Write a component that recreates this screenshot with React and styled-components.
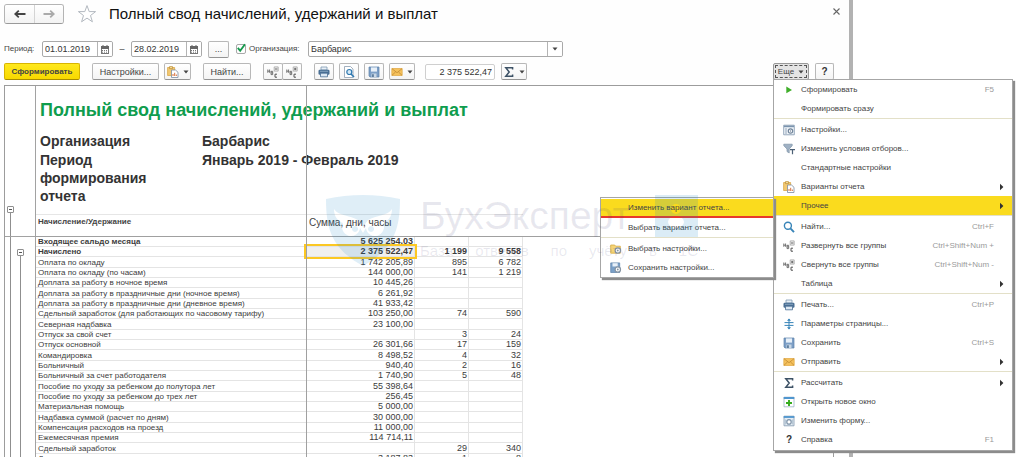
import React, { useState } from 'react';
import styled, { createGlobalStyle, css } from 'styled-components';

const GlobalStyle = createGlobalStyle`
  * {
    box-sizing: border-box;
  }

  body {
    margin: 0;
    background: #fff;
    color: #444;
    font-family: "Liberation Sans", Arial, sans-serif;
    font-size: 9px;
    line-height: 12px;
  }

  button, input, select {
    margin: 0;
    padding: 0;
    font: inherit;
    color: inherit;
  }
`;

const Page = styled.div`
  position: relative;
  display: grid;
  grid-template-columns: 1fr 171px;
  height: 100vh;
  overflow: hidden;
`;

const Window = styled.main`
  display: flex;
  flex-direction: column;
  min-width: 0;
  padding: 4px 15px 0 4px;
  border-right: 4px solid #b2b2b2;
  background: #fefefe;
`;

const SidePanel = styled.aside`
  margin-bottom: 3px;
  border-bottom: 1px solid #a8a8a8;
`;

const Header = styled.header`
  display: flex;
  align-items: center;
  height: 20px;
  margin: 0 -6px 17px 0;
`;

const NavButtons = styled.div`
  display: flex;
  height: 20px;
  border: 1px solid #b4b4b4;
  border-bottom-color: #999;
  border-radius: 3px;
  overflow: hidden;
`;

const NavButton = styled.button`
  display: flex;
  align-items: center;
  justify-content: center;
  width: 29px;
  border: none;
  background: linear-gradient(#fff, #f3f3f3);
  color: ${props => (props.disabled ? '#aaa' : '#444')};

  & + & {
    border-left: 1px solid #d4d4d4;
  }
`;

const StarButton = styled.button`
  display: flex;
  margin: 0 12px 0 13px;
  border: none;
  background: none;
`;

const Title = styled.h1`
  flex: 1;
  margin: 0;
  color: #111;
  font-size: 15px;
  font-weight: 400;
  line-height: 22px;
`;

const CloseButton = styled.button`
  display: flex;
  align-self: flex-start;
  margin: 4px 0 0;
  border: none;
  background: none;
`;

const FilterBar = styled.div`
  display: flex;
  align-items: center;
  height: 16px;
  margin-bottom: 6px;
`;

const FieldLabel = styled.label`
  width: ${props => props.$width}px;
  font-size: 8px;
  white-space: nowrap;
`;

const Field = styled.div`
  display: flex;
  width: ${props => props.$width}px;
  height: 16px;
  border: 1px solid #a9a9a9;
  border-radius: 2px;
  background: #fff;
  overflow: hidden;
`;

const TextInput = styled.input`
  flex: 1;
  min-width: 0;
  padding: 0 2px;
  border: none;
  outline: none;
  background: none;
  color: #333;
`;

const FieldSelect = styled.select`
  flex: 1;
  min-width: 0;
  padding: 0 2px;
  border: none;
  outline: none;
  appearance: none;
  background: none;
  color: #333;
`;

const FieldButton = styled.button`
  display: flex;
  align-items: center;
  justify-content: center;
  width: 15px;
  border: none;
  border-left: 1px solid #b4b4b4;
  background: #fff;
`;

const Dash = styled.span`
  width: 18px;
  text-align: center;
`;

const CheckWrap = styled.span`
  position: relative;
  display: flex;
  width: 10px;
  height: 10px;
  margin-left: 7px;
  margin-right: 3px;

  svg {
    position: absolute;
    top: -1px;
    left: 0;
    pointer-events: none;
  }
`;

const CheckBox = styled.input`
  width: 10px;
  height: 10px;
  appearance: none;
  border: 1px solid #a9a9a9;
  border-radius: 2px;
`;

const Toolbar = styled.div`
  display: flex;
  align-items: center;
  height: 17px;
  margin-bottom: 5px;
`;

const ToolGroup = styled.div`
  display: flex;
  margin-right: ${props => props.$after || 0}px;
`;

const ToolButton = styled.button`
  display: flex;
  flex: none;
  align-items: center;
  justify-content: center;
  gap: 4px;
  width: ${props => props.$width}px;
  height: 17px;
  margin-left: ${props => props.$before || 0}px;
  margin-right: ${props => props.$after || 0}px;
  border: 1px solid #b8b8b8;
  border-bottom-color: #949494;
  border-radius: 2px;
  background: linear-gradient(#fff, #f4f4f4);
  white-space: nowrap;

  ${ToolGroup} > & + & {
    margin-left: -1px;
  }

  ${props => props.$primary && css`
    border-color: #d8b400;
    border-bottom-color: #a98d00;
    background: linear-gradient(#ffe81c, #f8d900);
    font-size: 8px;
    font-weight: 700;
  `}

  ${props => props.$open && css`
    border-color: #999;
    background: #e4e4e4;
    font-size: 8px;
    outline: 1px dashed #555;
    outline-offset: -3px;
  `}
`;

const SumInput = styled.input`
  width: 70px;
  height: 16px;
  margin-right: 6px;
  padding: 0 2px;
  border: 1px solid #cfcfcf;
  border-radius: 2px;
  background: #fff;
  color: #333;
  text-align: right;
`;

const Spacer = styled.div`
  flex: 1;
`;

const MenuAnchor = styled.div`
  position: relative;
  margin-right: 6px;
`;

const MenuBox = styled.ul`
  position: absolute;
  z-index: 10;
  top: 16px;
  left: 0;
  width: 240px;
  margin: 0;
  padding: 0 0 1px;
  border: 1px solid #a6a6a6;
  background: #fff;
  box-shadow: 2px 2px 1px #8c8c8c;
  list-style: none;
`;

const SubMenuBox = styled(MenuBox)`
  top: 1px;
  right: 100%;
  left: auto;
  width: 174px;
  padding: 1px 0 0;
`;

const MenuEntry = styled.li`
  position: relative;
`;

const MenuButton = styled.button`
  display: flex;
  align-items: center;
  gap: 6px;
  width: 100%;
  height: 19px;
  padding: 0 8px 0 9px;
  border: none;
  border-bottom: ${props => (props.$marked ? '2px solid #e8382c' : 'none')};
  background: ${props => (props.$active ? '#fadb1e' : 'none')};
  font-size: 8px;
  text-align: left;
  white-space: nowrap;
`;

const MenuIcon = styled.span`
  display: flex;
  flex: none;
  justify-content: center;
  width: 12px;
`;

const MenuText = styled.span`
  flex: 1;
`;

const Shortcut = styled.kbd`
  margin-right: 10px;
  color: #9a9a9a;
  font-family: inherit;
  font-size: 8px;
`;

const MenuDivider = styled.hr`
  height: 1px;
  margin: 0 0 1px;
  border: none;
  background: #e3e0c8;
`;

const Report = styled.section`
  display: flex;
  flex: 1;
  min-height: 0;
  border: 1px solid #9c9c9c;
  border-bottom: none;
  background: #fff;
  overflow: hidden;
`;

const Outline = styled.div`
  position: relative;
  display: flex;
  flex: none;
  gap: 3px;
  width: 31px;
  padding-left: 2px;
  border-right: 1px solid #a2a2a2;

  &::after {
    content: "";
    position: absolute;
    top: 150px;
    left: 0;
    right: 0;
    height: 1px;
    background: #a2a2a2;
  }
`;

const OutlineTrack = styled.div`
  display: flex;
  flex-direction: column;
  align-items: center;
  padding-top: ${props => props.$top}px;

  &::after {
    content: "";
    flex: 1;
    width: 1px;
    background: #8f8f8f;
  }
`;

const OutlineToggle = styled.button`
  display: flex;
  align-items: center;
  justify-content: center;
  width: 7px;
  height: 7px;
  border: 1px solid #8f8f8f;
  border-radius: 1px;
  background: #fff;

  &::after {
    content: "";
    width: 3px;
    height: 1px;
    background: #555;
  }
`;

const Sheet = styled.div`
  position: relative;
  flex: 1;
  min-width: 0;
`;

const PageBreak = styled.div`
  position: absolute;
  top: 0;
  bottom: 0;
  left: 270px;
  width: 1px;
  background: #a0a0a0;
`;

const SheetTitle = styled.h2`
  margin: 13px 0 11px 4px;
  color: #0f9d4e;
  font-size: 18px;
  line-height: 22px;
`;

const Params = styled.dl`
  display: grid;
  grid-template-columns: 112px 1fr;
  column-gap: 50px;
  row-gap: 1px;
  margin: 0 0 9px 4px;
  color: #333;
  font-size: 14px;
  font-weight: 700;
  line-height: 18px;

  dt, dd {
    margin: 0;
  }
`;

const DataTable = styled.table`
  width: 100%;
  border-spacing: 0;
  table-layout: fixed;
`;

const HeadCell = styled.th`
  height: 23px;
  padding: 1px 2px 0;
  border-top: 1px solid ${props => (props.$blank ? 'transparent' : '#e6e6e6')};
  border-bottom: 1px solid #a0a0a0;
  font-size: ${props => (props.$large ? 10 : 8)}px;
  font-weight: ${props => (props.$large ? 400 : 700)};
  line-height: ${props => (props.$large ? 14 : 12)}px;
  text-align: left;
  vertical-align: top;
  white-space: nowrap;
`;

const Row = styled.tr`
  height: 10px;
  color: #3c3c3c;
  font-weight: ${props => (props.$bold ? 700 : 400)};

  &:nth-child(3n) {
    height: 11px;
  }
`;

const Cell = styled.td`
  padding: 0 1px;
  border-right: 1px solid #e4e4e4;
  border-bottom: 1px solid #e4e4e4;
  line-height: 9px;
  text-align: right;
  white-space: nowrap;

  ${props => props.$current && css`
    position: relative;
    background: #f0f0f0;

    &::after {
      content: "";
      position: absolute;
      inset: -3px;
      border: 2px solid #fcc823;
    }
  `}
`;

const NameCell = styled(Cell)`
  padding: 0 2px;
  border-right: none;
  font-size: 8px;
  text-align: left;
`;

const Blank = styled.td`
  padding: 0;
`;

const ScrollStrip = styled.div`
  display: flex;
  flex: none;
  flex-direction: column;
  justify-content: flex-end;
  align-items: center;
  width: 12px;
  padding-bottom: 2px;
`;

const Watermark = styled.div`
  position: absolute;
  z-index: 20;
  top: 195px;
  left: 326px;
  display: flex;
  gap: 20px;
  color: rgba(70, 70, 120, 0.12);
  pointer-events: none;
`;

const WatermarkText = styled.div`
  display: flex;
  flex-direction: column;
`;

const Brand = styled.div`
  display: flex;
  justify-content: space-between;
  font-size: 39px;
  line-height: 42px;
`;

const Slogan = styled.div`
  display: flex;
  justify-content: space-between;
  width: 278px;
  margin-top: 4px;
  font-size: 15px;
  line-height: 20px;
`;

const Icon = ({ size = 12, children }) => (
  <svg width={size} height={size} viewBox="0 0 12 12" fill="none" aria-hidden="true">
    {children}
  </svg>
);

const Caret = () => (
  <svg width="6" height="4" viewBox="0 0 6 4" aria-hidden="true">
    <path d="M0.5 0.5h5L3 3.5z" fill="#444" />
  </svg>
);

const ArrowRight = () => (
  <svg width="5" height="8" viewBox="0 0 5 8" aria-hidden="true">
    <path d="M1 0.8v6.4L4.4 4z" fill="#333" />
  </svg>
);

const NavArrow = ({ flip }) => (
  <svg width="12" height="10" viewBox="0 0 12 10" fill="none" aria-hidden="true">
    <path
      d={flip ? 'M0.5 5h10M7.2 1.6L10.8 5 7.2 8.4' : 'M11.5 5h-10M4.8 1.6L1.2 5l3.6 3.4'}
      stroke="currentColor"
      strokeWidth="1.8"
    />
  </svg>
);

const StarIcon = () => (
  <svg width="20" height="20" viewBox="0 0 20 20" fill="none" aria-hidden="true">
    <path
      d="M10 1.6l2.2 6h6.4l-5.1 3.9 1.9 6.3L10 14.1l-5.4 3.7 1.9-6.3-5.1-3.9h6.4z"
      fill="#fff"
      stroke="#b3b9c0"
    />
  </svg>
);

const CalendarIcon = () => (
  <svg width="8" height="9" viewBox="0 0 8 9" fill="none" aria-hidden="true">
    <rect x="0.5" y="1.5" width="7" height="7" fill="#fff" stroke="#777" />
    <path d="M0 1h8v3H0z" fill="#666" />
    <path d="M2 0v2M6 0v2" stroke="#666" />
    <path d="M1 5.5h6M1 7.2h6" stroke="#777" strokeDasharray="1 1" />
  </svg>
);

const CopyIcon = () => (
  <Icon>
    <path d="M0.6 1.5h7v8h-7z" fill="#f3c871" stroke="#d9a84a" strokeWidth="0.8" />
    <path d="M2.5 0.6h3v2h-3z" fill="#f7dfa3" stroke="#b98a30" strokeWidth="0.7" />
    <path d="M4.5 4h4l2.5 2.3v5.2H4.5z" fill="#fff" stroke="#7c8ba0" strokeWidth="0.8" />
    <path d="M6 10V8M7.7 10V6.8M9.3 10V8.5" stroke="#d9703a" />
  </Icon>
);

const TreeIcon = ({ plus }) => (
  <Icon>
    <path d="M0.8 3.5v3.3M2.6 3.5v3.3M0.8 5.2h1.8" stroke="#666" strokeWidth="0.9" />
    <path d="M4 5v3.6h1.7V5.3H4M4 6.9h1.7" stroke="#666" strokeWidth="0.9" />
    <path d="M10 8.2H8v3h2" stroke="#555" />
    <path d="M7.2 0.9h4v4.2h-4z" fill="#eee" stroke="#a5a5a5" strokeWidth="0.8" />
    <path d={plus ? 'M8 3h2.4M9.2 1.9v2.3' : 'M8 3h2.4'} stroke="#555" strokeWidth="0.9" />
  </Icon>
);

const PrintIcon = () => (
  <Icon>
    <path d="M3 1h6v3H3z" fill="#e9f0f7" stroke="#7e99b3" strokeWidth="0.8" />
    <rect x="0.5" y="3.7" width="11" height="5" rx="1.2" fill="#4a6f94" />
    <path d="M2.5 7.2h7v3.6h-7z" fill="#dce8f3" stroke="#4a6f94" strokeWidth="0.8" />
    <path d="M2 5.3h8" stroke="#9db9d3" strokeWidth="0.7" />
  </Icon>
);

const PreviewIcon = () => (
  <Icon>
    <path d="M1.5 0.5h6L10 3v8.5H1.5z" fill="#fff" stroke="#8b9db0" strokeWidth="0.8" />
    <circle cx="6.3" cy="6" r="2.5" fill="#d5e9f7" stroke="#2f79b0" strokeWidth="1.2" />
    <path d="M8 8l3 3" stroke="#2f79b0" strokeWidth="1.6" />
  </Icon>
);

const SaveIcon = () => (
  <Icon>
    <path d="M1 1h10v10H2L1 10z" fill="#7d9fc6" stroke="#5d82ab" strokeWidth="0.7" />
    <path d="M3 1.4h6v4.2H3z" fill="#e8f0f8" />
    <path d="M3.5 7.5h5V11h-5z" fill="#c9d7e5" />
    <path d="M4.2 8.2h1.5V11H4.2z" fill="#47698d" />
  </Icon>
);

const MailIcon = () => (
  <Icon>
    <path d="M0.8 2.5h10.4v7H0.8z" fill="#f5c15c" stroke="#e0a63f" strokeWidth="0.7" />
    <path d="M1 2.7l5 4 5-4M1 9.3l3.6-3.4M11 9.3L7.4 5.9" stroke="#c08a35" strokeWidth="0.8" />
  </Icon>
);

const SigmaIcon = () => (
  <Icon>
    <path d="M9.6 3.4V1.7H2.8L6.2 6l-3.4 4.3h6.8V8.6" stroke="#3d5266" strokeWidth="1.5" />
  </Icon>
);

const PlayIcon = () => (
  <Icon>
    <path d="M3.3 2.6v6.6L9 5.9z" fill="#3fae29" />
  </Icon>
);

const SettingsIcon = () => (
  <Icon>
    <path d="M0.7 1.2h10.6v9.6H0.7z" fill="#eef3f8" stroke="#8ca0b5" strokeWidth="0.9" />
    <path d="M1 2.4h10" stroke="#7a93ad" strokeWidth="1.6" />
    <path d="M2 5h2M2 7h2M2 9h2" stroke="#8ca0b5" strokeWidth="0.9" />
    <circle cx="7.5" cy="7" r="2.2" fill="#fff" stroke="#71859b" strokeWidth="1.2" />
    <circle cx="7.5" cy="7" r="0.7" fill="#71859b" />
  </Icon>
);

const FilterIcon = () => (
  <Icon>
    <path d="M0.8 1.2h8.4v1.5L6.2 6v4L4 8.6V6L0.8 2.7z" fill="#9fb1c4" stroke="#8093a8" strokeWidth="0.7" />
    <path d="M7 6.7h5M9.5 6.7v4.6" stroke="#4b5f75" strokeWidth="1.2" />
  </Icon>
);

const SearchIcon = () => (
  <Icon>
    <circle cx="4.9" cy="4.7" r="3.5" stroke="#3784b8" strokeWidth="1.4" />
    <path d="M7.4 7.3l3.6 3.8" stroke="#3784b8" strokeWidth="1.9" />
  </Icon>
);

const PageSetupIcon = () => (
  <Icon>
    <path d="M6 1v10M1.5 4.6h9M1.5 7.4h9" stroke="#3784b8" />
    <path d="M4 2.8L6 0.6l2 2.2zM4 9.2l2 2.2 2-2.2z" fill="#3784b8" />
  </Icon>
);

const NewWindowIcon = () => (
  <Icon>
    <path d="M1 1.2h10v9.6H1z" fill="#fff" stroke="#9db3c7" strokeWidth="0.8" />
    <path d="M0.7 2h10.6" stroke="#4f96cf" strokeWidth="2" />
    <path d="M6 4v6M3 7h6" stroke="#35ac1e" strokeWidth="1.9" />
  </Icon>
);

const EditFormIcon = () => (
  <Icon>
    <path d="M1 1.2h10v9.6H1z" fill="#e4edf5" stroke="#8ca0b5" strokeWidth="0.9" />
    <path d="M0.7 2h10.6" stroke="#4f96cf" strokeWidth="1.8" />
    <circle cx="6" cy="6.9" r="2.2" fill="#fff" stroke="#7f94a9" strokeWidth="1.2" />
    <path d="M2.5 4.5v5M9.5 4.5v5" stroke="#a9bccd" strokeWidth="0.8" />
  </Icon>
);

const FolderGearIcon = () => (
  <Icon>
    <path d="M0.7 2h4l1 1.2h4.6v7H0.7z" fill="#f6d476" stroke="#d6ab44" strokeWidth="0.8" />
    <circle cx="7.8" cy="7.5" r="2.7" fill="#fff" stroke="#8594a3" strokeWidth="1.2" />
    <circle cx="7.8" cy="7.5" r="0.9" fill="#8594a3" />
  </Icon>
);

const SaveGearIcon = () => (
  <Icon>
    <path d="M0.7 0.9h9v9.6h-9z" fill="#7aa0c8" stroke="#5b80a8" strokeWidth="0.7" />
    <path d="M2.5 1.2h5.2v3.3H2.5z" fill="#e8f0f8" />
    <circle cx="7.8" cy="7.5" r="2.7" fill="#fff" stroke="#8594a3" strokeWidth="1.2" />
    <circle cx="7.8" cy="7.5" r="0.9" fill="#8594a3" />
  </Icon>
);

const QuestionMark = styled.b`
  color: #333;
  font-size: 10px;
`;

const subMenu = [
  { text: 'Изменить вариант отчета...', active: true, marked: true },
  { text: 'Выбрать вариант отчета...' },
  null,
  { text: 'Выбрать настройки...', icon: <FolderGearIcon /> },
  { text: 'Сохранить настройки...', icon: <SaveGearIcon /> },
];

const mainMenu = [
  { text: 'Сформировать', icon: <PlayIcon />, shortcut: 'F5' },
  { text: 'Формировать сразу' },
  null,
  { text: 'Настройки...', icon: <SettingsIcon /> },
  { text: 'Изменить условия отборов...', icon: <FilterIcon /> },
  { text: 'Стандартные настройки' },
  { text: 'Варианты отчета', icon: <CopyIcon />, arrow: true },
  { text: 'Прочее', arrow: true, active: true, items: subMenu },
  null,
  { text: 'Найти...', icon: <SearchIcon />, shortcut: 'Ctrl+F' },
  { text: 'Развернуть все группы', icon: <TreeIcon />, shortcut: 'Ctrl+Shift+Num +' },
  { text: 'Свернуть все группы', icon: <TreeIcon plus />, shortcut: 'Ctrl+Shift+Num -' },
  { text: 'Таблица', arrow: true },
  null,
  { text: 'Печать...', icon: <PrintIcon />, shortcut: 'Ctrl+P' },
  { text: 'Параметры страницы...', icon: <PageSetupIcon /> },
  { text: 'Сохранить', icon: <SaveIcon />, shortcut: 'Ctrl+S' },
  { text: 'Отправить', icon: <MailIcon />, arrow: true },
  null,
  { text: 'Рассчитать', icon: <SigmaIcon />, arrow: true },
  { text: 'Открыть новое окно', icon: <NewWindowIcon /> },
  { text: 'Изменить форму...', icon: <EditFormIcon /> },
  { text: 'Справка', icon: <QuestionMark>?</QuestionMark>, shortcut: 'F1' },
];

const rows = [
  { name: 'Входящее сальдо месяца', sum: '5 625 254,03', bold: true },
  { name: 'Начислено', sum: '2 375 522,47', days: '1 199', hours: '9 558', bold: true, current: true },
  { name: 'Оплата по окладу', sum: '1 742 205,89', days: '895', hours: '6 782' },
  { name: 'Оплата по окладу (по часам)', sum: '144 000,00', days: '141', hours: '1 219' },
  { name: 'Доплата за работу в ночное время', sum: '10 445,26' },
  { name: 'Доплата за работу в праздничные дни (ночное время)', sum: '6 261,92' },
  { name: 'Доплата за работу в праздничные дни (дневное время)', sum: '41 933,42' },
  { name: 'Сдельный заработок (для работающих по часовому тарифу)', sum: '103 250,00', days: '74', hours: '590' },
  { name: 'Северная надбавка', sum: '23 100,00' },
  { name: 'Отпуск за свой счет', days: '3', hours: '24' },
  { name: 'Отпуск основной', sum: '26 301,66', days: '17', hours: '159' },
  { name: 'Командировка', sum: '8 498,52', days: '4', hours: '32' },
  { name: 'Больничный', sum: '940,40', days: '2', hours: '16' },
  { name: 'Больничный за счет работодателя', sum: '1 740,90', days: '5', hours: '48' },
  { name: 'Пособие по уходу за ребенком до полутора лет', sum: '55 398,64' },
  { name: 'Пособие по уходу за ребенком до трех лет', sum: '256,45' },
  { name: 'Материальная помощь', sum: '5 000,00' },
  { name: 'Надбавка суммой (расчет по дням)', sum: '30 000,00' },
  { name: 'Компенсация расходов на проезд', sum: '11 000,00' },
  { name: 'Ежемесячная премия', sum: '114 714,11' },
  { name: 'Сдельный заработок', days: '29', hours: '340' },
  { name: 'Доплата за совмещение, стаж', sum: '3 187,83', days: '1', hours: '8' },
];

const Menu = ({ items, box: Box = MenuBox }) => (
  <Box>
    {items.map((item, i) => (item ? (
      <MenuEntry key={item.text}>
        <MenuButton type="button" $active={item.active} $marked={item.marked}>
          <MenuIcon>{item.icon}</MenuIcon>
          <MenuText>{item.text}</MenuText>
          {item.shortcut && <Shortcut>{item.shortcut}</Shortcut>}
          {item.arrow && <ArrowRight />}
        </MenuButton>
        {item.items && <Menu items={item.items} box={SubMenuBox} />}
      </MenuEntry>
    ) : (
      <li key={i}><MenuDivider /></li>
    )))}
  </Box>
);

const DateField = ({ id, label, value }) => (
  <Field $width={71}>
    <TextInput id={id} aria-label={label} defaultValue={value} />
    <FieldButton type="button" title="Календарь"><CalendarIcon /></FieldButton>
  </Field>
);

const App = () => {
  const [byOrg, setByOrg] = useState(true);
  const [menuOpen, setMenuOpen] = useState(true);

  return (
    <Page>
      <GlobalStyle />
      <Window>
        <Header>
          <NavButtons>
            <NavButton type="button" title="Назад"><NavArrow /></NavButton>
            <NavButton type="button" title="Вперед" disabled><NavArrow flip /></NavButton>
          </NavButtons>
          <StarButton type="button" title="Избранное"><StarIcon /></StarButton>
          <Title>Полный свод начислений, удержаний и выплат</Title>
          <CloseButton type="button" title="Закрыть">
            <svg width="7" height="7" viewBox="0 0 7 7" aria-hidden="true">
              <path d="M0.5 0.5l6 6M6.5 0.5l-6 6" stroke="#666" strokeWidth="1.1" />
            </svg>
          </CloseButton>
        </Header>

        <FilterBar>
          <FieldLabel htmlFor="from" $width={38}>Период:</FieldLabel>
          <DateField id="from" value="01.01.2019" />
          <Dash>–</Dash>
          <DateField id="to" label="Конец периода" value="28.02.2019" />
          <ToolButton type="button" title="Выбрать период" $width={21} $before={6}>...</ToolButton>
          <CheckWrap>
            <CheckBox id="byOrg" type="checkbox" checked={byOrg} onChange={() => setByOrg(!byOrg)} />
            {byOrg && (
              <svg width="10" height="10" viewBox="0 0 10 10" fill="none" aria-hidden="true">
                <path d="M1.8 4.8l2.4 3L9 1.3" stroke="#159a4c" strokeWidth="1.9" />
              </svg>
            )}
          </CheckWrap>
          <FieldLabel htmlFor="byOrg" $width={59}>Организация:</FieldLabel>
          <Field $width={255}>
            <FieldSelect aria-label="Организация" defaultValue="Барбарис">
              <option>Барбарис</option>
            </FieldSelect>
            <FieldButton type="button" title="Показать список"><Caret /></FieldButton>
          </Field>
        </FilterBar>

        <Toolbar>
          <ToolButton type="button" $primary $width={76} $after={12}>Сформировать</ToolButton>
          <ToolButton type="button" $width={67} $after={5}>Настройки...</ToolButton>
          <ToolButton type="button" title="Варианты отчета" $width={27} $after={12}><CopyIcon /><Caret /></ToolButton>
          <ToolButton type="button" $width={48} $after={12}>Найти...</ToolButton>
          <ToolGroup $after={12}>
            <ToolButton type="button" title="Развернуть" $width={20}><TreeIcon /></ToolButton>
            <ToolButton type="button" title="Свернуть" $width={20}><TreeIcon plus /></ToolButton>
          </ToolGroup>
          <ToolButton type="button" title="Печать" $width={20} $after={5}><PrintIcon /></ToolButton>
          <ToolButton type="button" title="Просмотр" $width={20} $after={5}><PreviewIcon /></ToolButton>
          <ToolButton type="button" title="Сохранить" $width={20} $after={5}><SaveIcon /></ToolButton>
          <ToolButton type="button" title="Отправить" $width={26} $after={10}><MailIcon /><Caret /></ToolButton>
          <SumInput aria-label="Сумма" value="2 375 522,47" readOnly />
          <ToolButton type="button" title="Рассчитать" $width={26}><SigmaIcon /><Caret /></ToolButton>
          <Spacer />
          <MenuAnchor>
            <ToolButton type="button" $open={menuOpen} $width={36} onClick={() => setMenuOpen(!menuOpen)}>
              Еще <Caret />
            </ToolButton>
            {menuOpen && <Menu items={mainMenu} />}
          </MenuAnchor>
          <ToolButton type="button" title="Справка" $width={19}><QuestionMark>?</QuestionMark></ToolButton>
        </Toolbar>

        <Report>
          <Outline>
            <OutlineTrack $top={120}><OutlineToggle type="button" title="Свернуть" /></OutlineTrack>
            <OutlineTrack $top={163}><OutlineToggle type="button" title="Свернуть" /></OutlineTrack>
          </Outline>
          <Sheet>
            <SheetTitle>Полный свод начислений, удержаний и выплат</SheetTitle>
            <Params>
              <dt>Организация</dt>
              <dd>Барбарис</dd>
              <dt>Период формирования отчета</dt>
              <dd>Январь 2019 - Февраль 2019</dd>
            </Params>
            <DataTable>
              <colgroup>
                <col width="271" />
                <col width="108" />
                <col width="54" />
                <col width="54" />
                <col />
              </colgroup>
              <thead>
                <tr>
                  <HeadCell>Начисление/Удержание</HeadCell>
                  <HeadCell $large colSpan={3}>Сумма, дни, часы</HeadCell>
                  <HeadCell $blank />
                </tr>
              </thead>
              <tbody>
                {rows.map((row, i) => (
                  <Row key={i} $bold={row.bold}>
                    <NameCell>{row.name}</NameCell>
                    <Cell $current={row.current}>{row.sum}</Cell>
                    <Cell>{row.days}</Cell>
                    <Cell>{row.hours}</Cell>
                    <Blank />
                  </Row>
                ))}
              </tbody>
            </DataTable>
            <PageBreak />
          </Sheet>
          <ScrollStrip><Caret /></ScrollStrip>
        </Report>
      </Window>
      <SidePanel />

      <Watermark aria-hidden="true">
        <svg width="74" height="72" viewBox="0 0 74 72">
          <path
            d="M0 4Q37-4 74 4C74 34 68 54 37 71 6 54 0 34 0 4z
              M8 14c4 7 16 6 24 11l5 7 5-7c8-5 20-4 24-11 0 8-4 12-9 14a9 9 0 1 1-17 5l-3 5-3-5a9 9 0 1 1-17-5c-5-2-9-6-9-14z
              M29 31a3 3 0 1 0 .1 0z M45 31a3 3 0 1 0 .1 0z"
            fill="#1f86c8"
            fillOpacity="0.14"
            fillRule="evenodd"
          />
        </svg>
        <WatermarkText>
          <Brand>
            <span>БухЭксперт</span>
            <svg width="43" height="42" viewBox="0 0 43 42">
              <path
                d="M0 0h43v42H0z M16 14a5 5 0 1 0 10 0a5 5 0 1 0 -10 0z M13 27a8 6 0 1 0 16 0a8 6 0 1 0 -16 0z"
                fill="#1f86c8"
                fillOpacity="0.16"
                fillRule="evenodd"
              />
            </svg>
          </Brand>
          <Slogan>
            <span>База</span>
            <span>ответов</span>
            <span>по</span>
            <span>учёту</span>
            <span>в</span>
            <span>1С</span>
          </Slogan>
        </WatermarkText>
      </Watermark>
    </Page>
  );
};

export default App;
